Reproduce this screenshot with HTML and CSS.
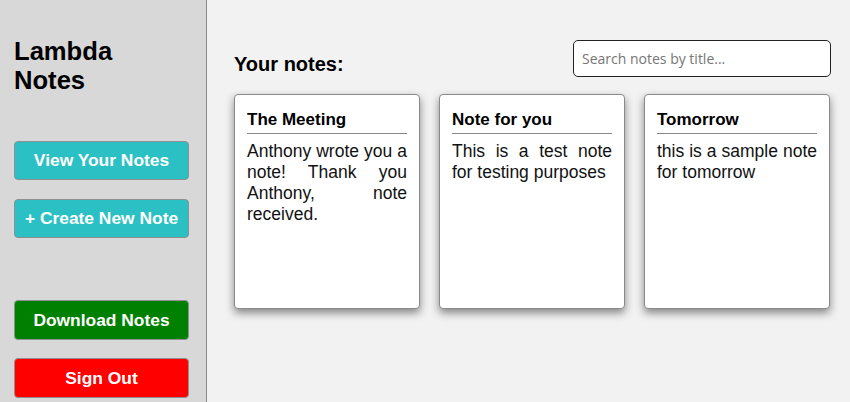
FILE: index.html
```html
<!DOCTYPE html>
<html>
<head>
<meta charset="utf-8">
<link rel="stylesheet" href="styles.css">
</head>
<body>
<div class="app">
  <aside class="sidebar">
    <h1 class="brand">Lambda<br>Notes</h1>
    <div class="nav">
      <button class="btn btn-teal">View Your Notes</button>
      <button class="btn btn-teal">+ Create New Note</button>
    </div>
    <div class="nav nav-bottom">
      <button class="btn btn-green">Download Notes</button>
      <button class="btn btn-red">Sign Out</button>
    </div>
  </aside>
  <main class="main">
    <div class="header">
      <h2 class="heading">Your notes:</h2>
      <input class="search" type="text" placeholder="Search notes by title...">
    </div>
    <div class="cards">
      <div class="card">
        <h3 class="card-title">The Meeting</h3>
        <p class="card-text">Anthony wrote you a note! Thank you Anthony, note received.</p>
      </div>
      <div class="card">
        <h3 class="card-title">Note for you</h3>
        <p class="card-text">This is a test note for testing purposes</p>
      </div>
      <div class="card">
        <h3 class="card-title">Tomorrow</h3>
        <p class="card-text">this is a sample note for tomorrow</p>
      </div>
    </div>
  </main>
</div>
</body>
</html>
```

FILE: styles.css
```css
* { box-sizing: border-box; }
html, body { margin: 0; padding: 0; height: 100%; }
body {
  font-family: "Liberation Sans", Arial, sans-serif;
  background: #f2f2f2;
  color: #000;
  overflow: hidden;
}
.app {
  display: flex;
  height: 402px;
}
.sidebar {
  width: 207px;
  flex: none;
  background: #d8d8d8;
  border-right: 1px solid #8a8a8a;
  padding: 0 18px 0 14px;
  display: flex;
  flex-direction: column;
}
.brand {
  margin: 37px 0 0;
  font-size: 25.6px;
  line-height: 29px;
  font-weight: bold;
}
.nav {
  display: flex;
  flex-direction: column;
  gap: 19px;
  margin-top: 46px;
}
.nav-bottom {
  margin-top: 62px;
  gap: 18px;
}
.btn {
  width: 175px;
  height: 39px;
  border: 1px solid #8f8f8f;
  border-radius: 4px;
  color: #fff;
  font-family: "Liberation Sans", Arial, sans-serif;
  font-size: 17.4px;
  font-weight: bold;
  padding: 0;
  text-align: center;
}
.nav-bottom .btn { height: 40px; }
.btn-teal { background: #2bc1c4; }
.btn-green { background: #008000; }
.btn-red { background: #ff0000; }
.main {
  flex: 1;
  padding: 40px 19px 0 27px;
}
.header {
  display: flex;
  justify-content: space-between;
  align-items: flex-end;
}
.heading {
  margin: 0 0 1px;
  font-size: 20px;
  line-height: 23px;
  font-weight: bold;
}
.search {
  width: 258px;
  height: 37px;
  border: 1px solid #222;
  border-radius: 5px;
  background: #fff;
  padding: 0 8px;
  font-family: "Open Sans", sans-serif;
  font-size: 14px;
  outline: none;
}
.search::placeholder { color: #767676; }
.cards {
  display: flex;
  gap: 19px;
  margin-top: 17px;
}
.card {
  width: 186px;
  height: 215px;
  background: #fff;
  border: 1px solid #8a8a8a;
  border-radius: 4px;
  box-shadow: 0 4px 8px rgba(0, 0, 0, 0.45);
  padding: 15px 12px 0;
}
.card-title {
  margin: 0;
  font-size: 17px;
  line-height: 20px;
  font-weight: bold;
  padding-bottom: 3px;
  border-bottom: 1px solid #888;
}
.card-text {
  margin: 7px 0 0;
  font-size: 17.5px;
  line-height: 21px;
  text-align: justify;
  color: #111;
}
```
